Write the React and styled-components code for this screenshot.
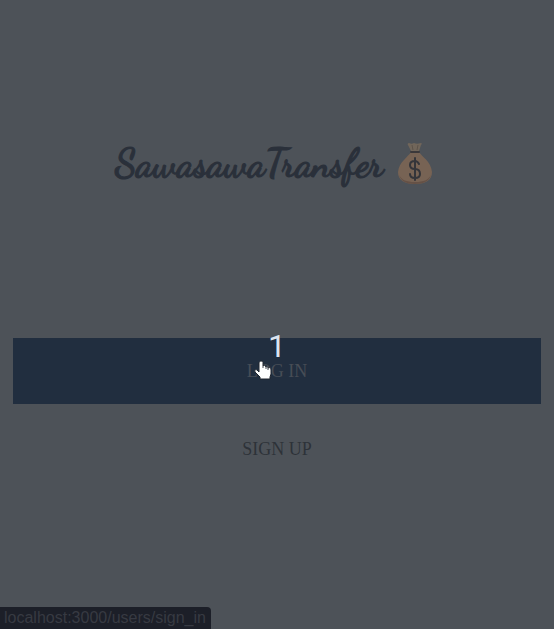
import React from "react";
import styled, { createGlobalStyle } from "styled-components";

const GlobalStyle = createGlobalStyle`
  * { box-sizing: border-box; }
  body { margin: 0; background: #4d5258; }
`;

const Page = styled.main`
  position: relative;
  display: flex;
  flex-direction: column;
  min-height: 100vh;
  background: #4d5258;
  overflow: hidden;
`;

const Hero = styled.header`
  display: flex;
  align-items: center;
  justify-content: center;
  gap: 14px;
  padding: 135px 18px 145px 12px;
`;

const Title = styled.h1`
  margin: 0;
  font: 700 38px/58px "Dancing Script", cursive;
  color: #2a303a;
  -webkit-text-stroke: 1px #2a303a;
  white-space: nowrap;
`;

const MoneyBag = styled.svg`
  width: 36px;
  height: 44px;
  flex: none;
`;

const Actions = styled.nav`
  display: flex;
  flex-direction: column;
  gap: 12px;
  padding: 0 13px;
`;

const ActionLink = styled.a`
  position: relative;
  display: flex;
  align-items: center;
  justify-content: center;
  height: 66px;
  font: 18px/24px "Liberation Serif", serif;
  text-decoration: none;
  color: ${({ $primary }) => ($primary ? "#474d56" : "#2d3239")};
  background: ${({ $primary }) => ($primary ? "#212e3f" : "transparent")};
`;

const Count = styled.span`
  position: absolute;
  top: -6px;
  left: 50%;
  transform: translateX(-50%);
  font: 32px/28px "Roboto", sans-serif;
  color: #dce5f0;
`;

const Pointer = styled.svg`
  position: absolute;
  top: 22px;
  left: calc(50% - 23px);
  width: 18px;
  height: 20px;
`;

const StatusBar = styled.footer`
  position: absolute;
  bottom: 0;
  left: 0;
  padding: 0 5px 0 4px;
  border-radius: 0 4px 0 0;
  background: #1c1f28;
  color: #373a42;
  font: 16px/22px "Liberation Sans", sans-serif;
`;

function Bag() {
  return (
    <MoneyBag viewBox="0 0 36 44" role="img" aria-label="Money bag">
      <path d="M12 1c2 1 3 1 5 0 2 1 4 1 7 0 1 0 1 1 0 2l-2 6h-8l-3-6c-1-1 0-2 1-2z" fill="#71665a" />
      <path d="M14 10h8c3 5 12 9 13 20 0 8-6 12-17 12S1 38 1 30c1-10 10-15 13-20z" fill="#776354" />
      <path d="M2 33c3 5 7 7 16 7s13-2 16-7c-2 6-7 9-16 9S4 39 2 33z" fill="#655146" />
      <path d="M15 3l1 5M21 3l-1 5" stroke="#5d534a" fill="none" />
      <path d="M14 10h8" stroke="#3b383a" strokeWidth="2" strokeLinecap="round" />
      <path
        d="M22 22c-1-2-2-3-4-3-3 0-5 1-5 4s2 4 5 4 5 2 5 5-2 4-5 4-5-1-5-4M18 16v22"
        fill="none"
        stroke="#34353a"
        strokeWidth="2"
        strokeLinecap="round"
      />
    </MoneyBag>
  );
}

function Hand() {
  return (
    <Pointer viewBox="0 0 18 20" aria-hidden="true">
      <path
        d="M7 1c2 0 2 1 2 2v3c1-1 2-1 3 1 1-1 2 0 2 1 2-1 3 0 3 2v4l-1 3v2H6v-2l-5-5c-1-2 1-3 2-2l2 2V3c0-1 1-2 2-2z"
        fill="#fff"
        stroke="#20252d"
      />
      <path d="M9 6v2M12 7v2M14 8v2" stroke="#454b54" fill="none" />
    </Pointer>
  );
}

export default function App() {
  return (
    <>
      <GlobalStyle />
      <Page>
        <Hero>
          <Title>SawasawaTransfer</Title>
          <Bag />
        </Hero>
        <Actions>
          <ActionLink href="/users/sign_in" $primary>
            LOG IN
            <Hand />
            <Count>1</Count>
          </ActionLink>
          <ActionLink href="/users/sign_up">SIGN UP</ActionLink>
        </Actions>
        <StatusBar>localhost:3000/users/sign_in</StatusBar>
      </Page>
    </>
  );
}
